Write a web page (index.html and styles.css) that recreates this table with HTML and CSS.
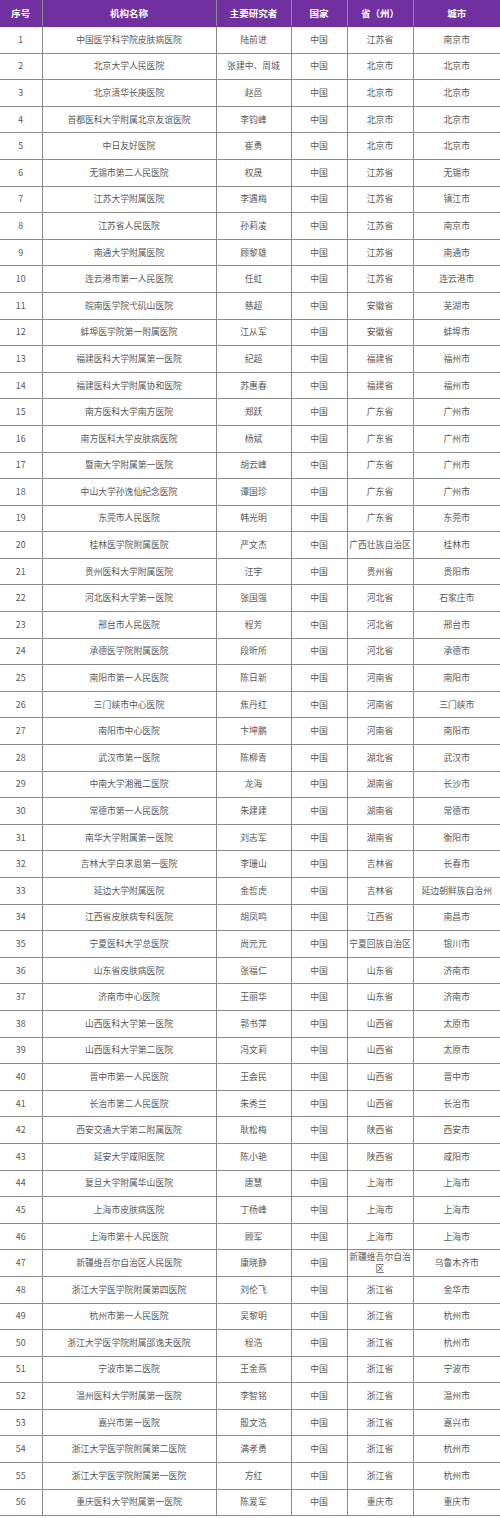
FILE: index.html
```html
<!DOCTYPE html>
<html lang="zh">
<head>
<meta charset="utf-8">
<link rel="stylesheet" href="styles.css">
</head>
<body>
<table class="sites">
<colgroup>
<col class="c-no"><col class="c-org"><col class="c-pi"><col class="c-country"><col class="c-prov"><col class="c-city">
</colgroup>
<thead>
<tr><th>序号</th><th>机构名称</th><th>主要研究者</th><th>国家</th><th>省（州）</th><th>城市</th></tr>
</thead>
<tbody>
<tr><td>1</td><td>中国医学科学院皮肤病医院</td><td>陆前进</td><td>中国</td><td>江苏省</td><td>南京市</td></tr>
<tr><td>2</td><td>北京大学人民医院</td><td>张建中、周城</td><td>中国</td><td>北京市</td><td>北京市</td></tr>
<tr><td>3</td><td>北京清华长庚医院</td><td>赵邑</td><td>中国</td><td>北京市</td><td>北京市</td></tr>
<tr><td>4</td><td>首都医科大学附属北京友谊医院</td><td>李钧峰</td><td>中国</td><td>北京市</td><td>北京市</td></tr>
<tr><td>5</td><td>中日友好医院</td><td>崔勇</td><td>中国</td><td>北京市</td><td>北京市</td></tr>
<tr><td>6</td><td>无锡市第二人民医院</td><td>权晟</td><td>中国</td><td>江苏省</td><td>无锡市</td></tr>
<tr><td>7</td><td>江苏大学附属医院</td><td>李遇梅</td><td>中国</td><td>江苏省</td><td>镇江市</td></tr>
<tr><td>8</td><td>江苏省人民医院</td><td>孙莉凌</td><td>中国</td><td>江苏省</td><td>南京市</td></tr>
<tr><td>9</td><td>南通大学附属医院</td><td>顾黎雄</td><td>中国</td><td>江苏省</td><td>南通市</td></tr>
<tr><td>10</td><td>连云港市第一人民医院</td><td>任虹</td><td>中国</td><td>江苏省</td><td>连云港市</td></tr>
<tr><td>11</td><td>皖南医学院弋矶山医院</td><td>慈超</td><td>中国</td><td>安徽省</td><td>芜湖市</td></tr>
<tr><td>12</td><td>蚌埠医学院第一附属医院</td><td>江从军</td><td>中国</td><td>安徽省</td><td>蚌埠市</td></tr>
<tr><td>13</td><td>福建医科大学附属第一医院</td><td>纪超</td><td>中国</td><td>福建省</td><td>福州市</td></tr>
<tr><td>14</td><td>福建医科大学附属协和医院</td><td>苏惠春</td><td>中国</td><td>福建省</td><td>福州市</td></tr>
<tr><td>15</td><td>南方医科大学南方医院</td><td>郑跃</td><td>中国</td><td>广东省</td><td>广州市</td></tr>
<tr><td>16</td><td>南方医科大学皮肤病医院</td><td>杨斌</td><td>中国</td><td>广东省</td><td>广州市</td></tr>
<tr><td>17</td><td>暨南大学附属第一医院</td><td>胡云峰</td><td>中国</td><td>广东省</td><td>广州市</td></tr>
<tr><td>18</td><td>中山大学孙逸仙纪念医院</td><td>谭国珍</td><td>中国</td><td>广东省</td><td>广州市</td></tr>
<tr><td>19</td><td>东莞市人民医院</td><td>韩光明</td><td>中国</td><td>广东省</td><td>东莞市</td></tr>
<tr><td>20</td><td>桂林医学院附属医院</td><td>严文杰</td><td>中国</td><td>广西壮族自治区</td><td>桂林市</td></tr>
<tr><td>21</td><td>贵州医科大学附属医院</td><td>汪宇</td><td>中国</td><td>贵州省</td><td>贵阳市</td></tr>
<tr><td>22</td><td>河北医科大学第一医院</td><td>张国强</td><td>中国</td><td>河北省</td><td>石家庄市</td></tr>
<tr><td>23</td><td>邢台市人民医院</td><td>程芳</td><td>中国</td><td>河北省</td><td>邢台市</td></tr>
<tr><td>24</td><td>承德医学院附属医院</td><td>段昕所</td><td>中国</td><td>河北省</td><td>承德市</td></tr>
<tr><td>25</td><td>南阳市第一人民医院</td><td>陈日新</td><td>中国</td><td>河南省</td><td>南阳市</td></tr>
<tr><td>26</td><td>三门峡市中心医院</td><td>焦丹红</td><td>中国</td><td>河南省</td><td>三门峡市</td></tr>
<tr><td>27</td><td>南阳市中心医院</td><td>卞坤鹏</td><td>中国</td><td>河南省</td><td>南阳市</td></tr>
<tr><td>28</td><td>武汉市第一医院</td><td>陈柳青</td><td>中国</td><td>湖北省</td><td>武汉市</td></tr>
<tr><td>29</td><td>中南大学湘雅二医院</td><td>龙海</td><td>中国</td><td>湖南省</td><td>长沙市</td></tr>
<tr><td>30</td><td>常德市第一人民医院</td><td>朱建建</td><td>中国</td><td>湖南省</td><td>常德市</td></tr>
<tr><td>31</td><td>南华大学附属第一医院</td><td>刘志军</td><td>中国</td><td>湖南省</td><td>衡阳市</td></tr>
<tr><td>32</td><td>吉林大学白求恩第一医院</td><td>李珊山</td><td>中国</td><td>吉林省</td><td>长春市</td></tr>
<tr><td>33</td><td>延边大学附属医院</td><td>金哲虎</td><td>中国</td><td>吉林省</td><td>延边朝鲜族自治州</td></tr>
<tr><td>34</td><td>江西省皮肤病专科医院</td><td>胡凤鸣</td><td>中国</td><td>江西省</td><td>南昌市</td></tr>
<tr><td>35</td><td>宁夏医科大学总医院</td><td>尚元元</td><td>中国</td><td>宁夏回族自治区</td><td>银川市</td></tr>
<tr><td>36</td><td>山东省皮肤病医院</td><td>张福仁</td><td>中国</td><td>山东省</td><td>济南市</td></tr>
<tr><td>37</td><td>济南市中心医院</td><td>王丽华</td><td>中国</td><td>山东省</td><td>济南市</td></tr>
<tr><td>38</td><td>山西医科大学第一医院</td><td>郭书萍</td><td>中国</td><td>山西省</td><td>太原市</td></tr>
<tr><td>39</td><td>山西医科大学第二医院</td><td>冯文莉</td><td>中国</td><td>山西省</td><td>太原市</td></tr>
<tr><td>40</td><td>晋中市第一人民医院</td><td>王会民</td><td>中国</td><td>山西省</td><td>晋中市</td></tr>
<tr><td>41</td><td>长治市第二人民医院</td><td>朱秀兰</td><td>中国</td><td>山西省</td><td>长治市</td></tr>
<tr><td>42</td><td>西安交通大学第二附属医院</td><td>耿松梅</td><td>中国</td><td>陕西省</td><td>西安市</td></tr>
<tr><td>43</td><td>延安大学咸阳医院</td><td>陈小艳</td><td>中国</td><td>陕西省</td><td>咸阳市</td></tr>
<tr><td>44</td><td>复旦大学附属华山医院</td><td>唐慧</td><td>中国</td><td>上海市</td><td>上海市</td></tr>
<tr><td>45</td><td>上海市皮肤病医院</td><td>丁杨峰</td><td>中国</td><td>上海市</td><td>上海市</td></tr>
<tr><td>46</td><td>上海市第十人民医院</td><td>顾军</td><td>中国</td><td>上海市</td><td>上海市</td></tr>
<tr><td>47</td><td>新疆维吾尔自治区人民医院</td><td>康晓静</td><td>中国</td><td>新疆维吾尔自治区</td><td>乌鲁木齐市</td></tr>
<tr><td>48</td><td>浙江大学医学院附属第四医院</td><td>刘伦飞</td><td>中国</td><td>浙江省</td><td>金华市</td></tr>
<tr><td>49</td><td>杭州市第一人民医院</td><td>吴黎明</td><td>中国</td><td>浙江省</td><td>杭州市</td></tr>
<tr><td>50</td><td>浙江大学医学院附属邵逸夫医院</td><td>程浩</td><td>中国</td><td>浙江省</td><td>杭州市</td></tr>
<tr><td>51</td><td>宁波市第二医院</td><td>王金燕</td><td>中国</td><td>浙江省</td><td>宁波市</td></tr>
<tr><td>52</td><td>温州医科大学附属第一医院</td><td>李智铭</td><td>中国</td><td>浙江省</td><td>温州市</td></tr>
<tr><td>53</td><td>嘉兴市第一医院</td><td>殷文浩</td><td>中国</td><td>浙江省</td><td>嘉兴市</td></tr>
<tr><td>54</td><td>浙江大学医学院附属第二医院</td><td>满孝勇</td><td>中国</td><td>浙江省</td><td>杭州市</td></tr>
<tr><td>55</td><td>浙江大学医学院附属第一医院</td><td>方红</td><td>中国</td><td>浙江省</td><td>杭州市</td></tr>
<tr><td>56</td><td>重庆医科大学附属第一医院</td><td>陈爱军</td><td>中国</td><td>重庆市</td><td>重庆市</td></tr>
</tbody>
</table>
</body>
</html>
```
FILE: styles.css
```css
html, body {
  margin: 0;
  padding: 0;
  background: #ffffff;
}
.sites {
  width: 500px;
  table-layout: fixed;
  border-collapse: collapse;
  font-family: "Noto Sans CJK SC", "Noto Sans", sans-serif;
  color: #595959;
}
.c-no { width: 42px; }
.c-org { width: 174px; }
.c-pi { width: 75px; }
.c-country { width: 56px; }
.c-prov { width: 66px; }
.c-city { width: 87px; }
.sites th,
.sites td {
  border: 1px solid #8c8c8c;
  padding: 0 1px;
  text-align: center;
  vertical-align: middle;
  line-height: 12px;
}
.sites th:first-child,
.sites td:first-child {
  border-left: none;
}
.sites th {
  height: 26px;
  background: #7030a0;
  color: #ffffff;
  font-size: 9.5px;
  font-weight: 700;
  border-top: none;
  border-color: #7030a0 #8c8c8c;
}
.sites td {
  height: 25.6px;
  font-size: 8.8px;
}
.sites th:last-child,
.sites td:last-child {
  border-right: none;
}
```
